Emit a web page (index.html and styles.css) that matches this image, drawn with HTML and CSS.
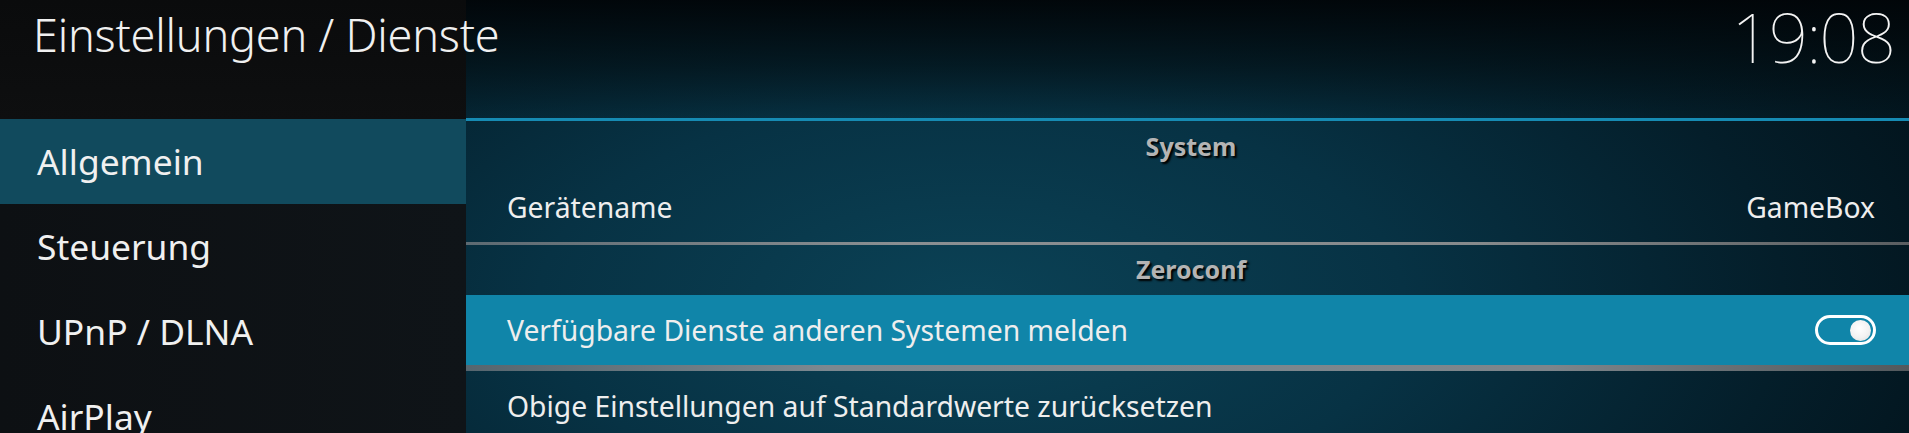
FILE: index.html
```html
<!DOCTYPE html>
<html lang="de">
<head>
<meta charset="utf-8">
<title>Einstellungen / Dienste</title>
<link rel="stylesheet" href="styles.css">
</head>
<body>
<div class="screen">
  <aside class="side">
    <header class="side-head">
      <h1 class="title">Einstellungen / Dienste</h1>
    </header>
    <nav class="menu">
      <div class="menu-item active">Allgemein</div>
      <div class="menu-item">Steuerung</div>
      <div class="menu-item">UPnP / DLNA</div>
      <div class="menu-item">AirPlay</div>
    </nav>
  </aside>
  <main class="main">
    <header class="main-head">
      <div class="clock">19:08</div>
    </header>
    <div class="rule-blue"></div>
    <section class="group">
      <div class="group-title">System</div>
      <div class="item">
        <span class="label">Gerätename</span>
        <span class="value">GameBox</span>
      </div>
    </section>
    <div class="rule-grey"></div>
    <section class="group">
      <div class="group-title">Zeroconf</div>
      <div class="item focused">
        <span class="label">Verfügbare Dienste anderen Systemen melden</span>
        <span class="toggle"><span class="knob"></span></span>
      </div>
      <div class="rule-focus"></div>
      <div class="item">
        <span class="label">Obige Einstellungen auf Standardwerte zurücksetzen</span>
      </div>
    </section>
  </main>
</div>
</body>
</html>
```
FILE: styles.css
```css
html, body {
  margin: 0;
  padding: 0;
  background: #0b0c0e;
  overflow: hidden;
}

.screen {
  display: flex;
  width: 1909px;
  height: 433px;
  overflow: hidden;
  font-family: "Noto Sans", "Open Sans", sans-serif;
  color: #f2f2f2;
}

/* ---------- left column ---------- */
.side {
  width: 466px;
  flex: none;
  display: flex;
  flex-direction: column;
  background: #0c0d0f;
  position: relative;
  z-index: 2;
}

.side-head {
  height: 119px;
  flex: none;
  overflow: visible;
  background: linear-gradient(to bottom, #0a0b0c 0%, #0e0f10 100%);
}

.title {
  margin: 0;
  padding: 4px 0 0 33px;
  font-size: 45px;
  letter-spacing: -0.2px;
  line-height: 61px;
  font-weight: 300;
  color: #f0f0f0;
  white-space: nowrap;
}

.menu {
  display: flex;
  flex-direction: column;
  background: linear-gradient(to right, #0d1013 0%, #0f1418 100%);
  flex: 1;
}

.menu-item {
  height: 85px;
  flex: none;
  padding-left: 37px;
  font-size: 35.4px;
  line-height: 85px;
  color: #f0f0f0;
  white-space: nowrap;
}

.menu-item.active {
  background: #114a5d;
}

/* ---------- right column ---------- */
.main {
  flex: 1;
  display: flex;
  flex-direction: column;
  background:
    radial-gradient(ellipse 75% 120% at 35% 70%, #0b4256 0%, #073244 40%, #041e2a 75%, #02121a 100%);
  position: relative;
  z-index: 1;
}

.main-head {
  height: 118px;
  flex: none;
  display: flex;
  justify-content: flex-end;
  align-items: flex-start;
  background: linear-gradient(to bottom, rgba(1,5,8,0.95) 0%, rgba(2,12,16,0.6) 55%, rgba(4,30,40,0.15) 100%);
}

.clock {
  padding: 0 15px 0 0;
  font-size: 69px;
  line-height: 72px;
  font-weight: 100;
  color: #f4f4f4;
  letter-spacing: -2px;
}

.rule-blue {
  height: 3px;
  flex: none;
  background: #168bb3;
}

.group {
  display: flex;
  flex-direction: column;
}

.group-title {
  height: 51px;
  padding-left: 7px;
  text-align: center;
  font-size: 25px;
  font-weight: 700;
  line-height: 51px;
  color: #b4b4b4;
  text-shadow: 2px 2px 2px #000;
}

.rule-grey {
  height: 3px;
  flex: none;
  background: linear-gradient(to right, #5d6a72 0%, #8a8f92 30%, #868a8c 70%, #5a5e61 100%);
}

.group + .rule-grey + .group .group-title {
  height: 50px;
  line-height: 49px;
}

.item {
  height: 70px;
  flex: none;
  display: flex;
  align-items: center;
  justify-content: space-between;
  padding: 0 34px 0 41px;
  font-size: 28.3px;
  color: #eeeeee;
  white-space: nowrap;
}

.item .label {
  line-height: 70px;
}

.item .value {
  line-height: 70px;
}

.item.focused {
  background: #1085a9;
  padding-right: 33px;
}

.rule-focus {
  height: 6px;
  flex: none;
  background: linear-gradient(to right, #56666f 0%, #7c8890 25%, #7d858b 75%, #53595d 100%);
}

.toggle {
  width: 53px;
  height: 24px;
  border: 3px solid #ffffff;
  border-radius: 15px;
  display: flex;
  align-items: center;
  justify-content: flex-end;
  padding-right: 2px;
  box-sizing: content-box;
}

.knob {
  width: 21px;
  height: 21px;
  border-radius: 50%;
  background: radial-gradient(circle at 45% 40%, #ffffff 0%, #f2f2f2 55%, #d8d8d8 100%);
}
```
